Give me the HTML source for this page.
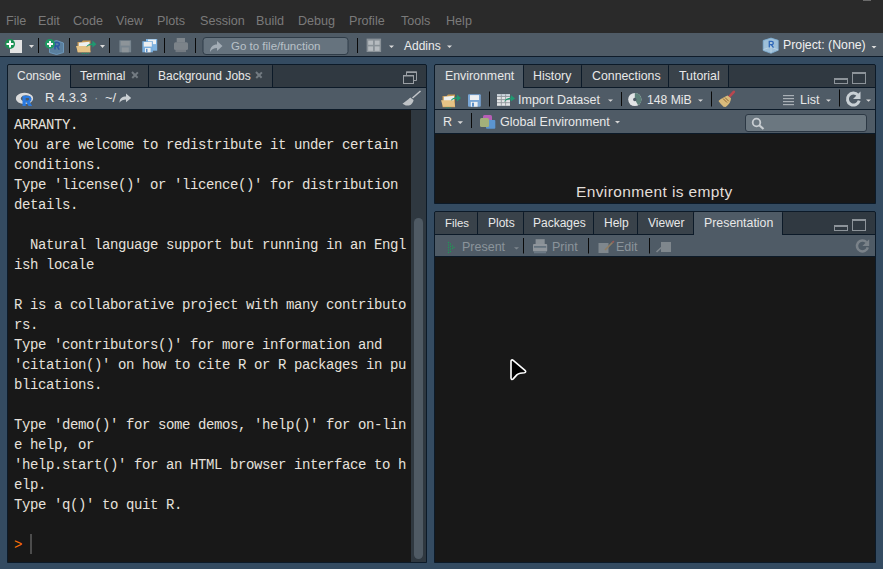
<!DOCTYPE html>
<html><head><meta charset="utf-8">
<style>
*{margin:0;padding:0;box-sizing:border-box}
html,body{width:883px;height:569px;overflow:hidden;background:#344b61;font-family:"Liberation Sans",sans-serif;position:relative}
.a{position:absolute}
#menubar{left:0;top:0;width:883px;height:33px;background:#2a2a2a}
#menubar span{position:absolute;top:14px;font-size:12.6px;color:#7a7a7a;line-height:15px}
#toolbar{left:0;top:33px;width:883px;height:24px;background:#4f5b66;border-bottom:1px solid #0f1c2a}
.sep{position:absolute;width:1px;background:#101010}
.pane{position:absolute;background:#181818;border:1px solid #0c1a28;border-radius:2px 2px 0 0;overflow:hidden}
.tabbar{position:absolute;left:0;top:0;right:0;height:23px;background:#303941;border-bottom:1px solid #0c1a28}
.tab{position:absolute;top:0;height:23px;background:#39424a;border-right:1px solid #0c1a28;border-radius:1px 1px 0 0;font-size:12px;color:#e8e8e8}
.tab.act{background:#4f5b66;height:23px}
.tab{height:22px}
.x{position:absolute;top:7px;width:7px;height:7px}
.x:before,.x:after{content:"";position:absolute;left:2.9px;top:-0.7px;width:1.5px;height:8.4px;background:#737b82;transform:rotate(45deg)}
.x:after{transform:rotate(-45deg)}
.sbar{position:absolute;background:#2f3840}
.thumb{position:absolute;background:#4f5a64;border-radius:5px}
.tab span{position:absolute;top:4px;line-height:14px}
.tbar{position:absolute;left:0;right:0;background:#4f5b66;border-bottom:1px solid #0c1a28;font-size:12px;color:#e8e8e8}
.tbar span{position:absolute;line-height:14px}
.con{font-family:"Liberation Mono",monospace;font-size:14px;letter-spacing:-0.4px;color:#e6e1dc;line-height:20px;white-space:pre}
.arr{position:absolute;width:0;height:0;border-left:3px solid transparent;border-right:3px solid transparent;border-top:3px solid #d0d0d0}
</style></head><body>
<div id="menubar" class="a">
<div class="a" style="left:863px;top:0;width:8px;height:1px;background:#6a6a6a"></div>
<span style="left:6px">File</span>
<span style="left:38px">Edit</span>
<span style="left:73px">Code</span>
<span style="left:116px">View</span>
<span style="left:157px">Plots</span>
<span style="left:200px">Session</span>
<span style="left:256px">Build</span>
<span style="left:298px">Debug</span>
<span style="left:349px">Profile</span>
<span style="left:401px">Tools</span>
<span style="left:446px">Help</span>
</div>
<div id="toolbar" class="a">
<svg class="a" style="left:0;top:0" width="883" height="23" viewBox="0 33 883 23">
 <!-- new file -->
 <rect x="10" y="40" width="12" height="13" fill="#e4e4e4"/>
 <circle cx="10" cy="44" r="5" fill="#1a9152"/>
 <rect x="6.5" y="43" width="7" height="2" fill="#fff"/>
 <rect x="9" y="40.5" width="2" height="7" fill="#fff"/>
 <path d="M29 45h5l-2.5 3z" fill="#dcdcdc"/>
 <rect x="38" y="38" width="1" height="15" fill="#0a0a0a"/>
 <!-- new project -->
 <path d="M49.5 43l7-2.5 7 2.5v9.5l-7 2-7-2z" fill="#5a7f9e" stroke="#6f9cc2" stroke-width="0.9"/>
 <path d="M55 42.5h2.5a1.8 1.8 0 0 1 0 3.6h-2.5zM55 42.5v7M57 46l2.2 3.6" stroke="#2a56a3" stroke-width="1.5" fill="none"/>
 <circle cx="49.9" cy="43.9" r="4.9" fill="#1d9c62"/>
 <rect x="47" y="43" width="6" height="2" fill="#f4f4f4"/>
 <rect x="49" y="41" width="2" height="6" fill="#f4f4f4"/>
 <rect x="69" y="38" width="1" height="15" fill="#0a0a0a"/>
 <!-- open folder -->
 <path d="M77.5 46v-4h4l1.5-1.5h7.5v11.7h-13z" fill="#c89a52"/>
 <path d="M78.8 42.8l10.7-1v8.5h-10.7z" fill="#eef0ef"/>
 <path d="M76 46h13.2l1.3 6.2h-12.6z" fill="#e5c386"/>
 <path d="M86.2 47.2c.8-2.6 3-3.8 6.2-3.8v-2.8l4 3.6-4 3.4v-2.6c-2.4 0-4.6.8-6.2 2.2z" fill="#1e9a70"/>
 <g fill="#1e9a70"><circle cx="82.3" cy="53.4" r=".6"/><circle cx="84.3" cy="53.4" r=".6"/><circle cx="86.3" cy="53.4" r=".6"/><circle cx="88.3" cy="53.4" r=".6"/></g>
 <path d="M100 45h5l-2.5 3z" fill="#dcdcdc"/>
 <rect x="109" y="38" width="1" height="15" fill="#0a0a0a"/>
 <!-- save disabled -->
 <rect x="119.4" y="40.3" width="11.7" height="12" fill="#78858f"/>
 <rect x="120.8" y="41" width="9" height="4.6" fill="#8d9499"/>
 <rect x="121.8" y="47.5" width="7" height="4.8" fill="#8d9499"/>
 <!-- save all -->
 <rect x="146" y="39" width="11.2" height="11.7" fill="#7fb3e0"/>
 <rect x="148" y="39.6" width="8" height="4.5" fill="#eef1f3"/>
 <rect x="142.3" y="41.2" width="10.6" height="11.1" fill="#7aaedd"/>
 <rect x="143.8" y="42" width="8" height="4.6" fill="#eceef0"/>
 <rect x="145" y="48" width="5.6" height="4.3" fill="#eceef0"/>
 <rect x="146" y="48.8" width="1.5" height="3.5" fill="#5b8fc8"/>
 <rect x="164" y="38" width="1" height="15" fill="#0a0a0a"/>
 <!-- print disabled -->
 <rect x="176.7" y="38" width="8.3" height="4.5" fill="#7f868c"/>
 <rect x="174" y="42.3" width="14" height="7.6" rx="1.5" fill="#7c8389"/>
 <rect x="175.5" y="49.9" width="10.5" height="2.2" fill="#737a81"/>
 <rect x="195" y="38" width="1" height="15" fill="#0a0a0a"/>
 <!-- goto box -->
 <rect x="203" y="37.5" width="145" height="17" rx="3" fill="#66737e" stroke="#2f3c48" stroke-width="1"/>
 <path d="M210 52c0-5 3-7.5 7-7.5v-3.5l5.5 5-5.5 5v-3c-3 0-5.5 1.5-7 4z" fill="#a3adb6"/>
 <rect x="357" y="38" width="1" height="15" fill="#0a0a0a"/>
 <!-- grid -->
 <rect x="366.6" y="38.6" width="14.5" height="13.4" fill="#8a9298"/>
 <g fill="#b6bbbf"><rect x="368.2" y="40.6" width="4.8" height="4.2"/><rect x="374.8" y="40.6" width="4.8" height="4.2"/><rect x="368.2" y="46.4" width="4.8" height="4.4"/><rect x="374.8" y="46.4" width="4.8" height="4.4"/></g>
 <path d="M389 45.5h5l-2.5 2.5z" fill="#dcdcdc"/>
 <path d="M447 45.5h5l-2.5 2.5z" fill="#dcdcdc"/>
 <!-- project icon -->
 <path d="M763.2 40.5l7.8-2.4 7.2 2.2v10l-7.2 3-7.8-2.8z" fill="#9ebfd8" stroke="#7fb0d6" stroke-width="0.8"/>
 <path d="M771 40.6v12.2M763.5 49.5l7.5-2.5 7.2 3" stroke="#c3d8e8" stroke-width="0.7" fill="none"/>
 <path d="M769.3 41.3h2.3a1.7 1.7 0 0 1 0 3.4h-2.3zM769.3 41.3v6.2M771.2 44.7l2.3 3" stroke="#2f68b8" stroke-width="1.3" fill="none"/>
 <path d="M871.5 46h5l-2.5 2.5z" fill="#dcdcdc"/>
</svg>
<span class="a" style="left:231px;top:7px;font-size:11.5px;line-height:13px;color:#b9c1c8">Go to file/function</span>
<span class="a" style="left:404px;top:6px;font-size:12px;line-height:14px;color:#ececec">Addins</span>
<span class="a" style="left:783px;top:5px;font-size:12.3px;line-height:15px;color:#f0f0f0">Project: (None)</span>
</div>

<!-- left pane -->
<div class="pane" style="left:7px;top:64px;width:420px;height:499px">
  <div class="tabbar">
    <div class="tab act" style="left:0;width:63px"><span style="left:9px">Console</span></div>
    <div class="tab" style="left:63px;width:78px"><span style="left:9px">Terminal</span><i class="x" style="left:60px"></i></div>
    <div class="tab" style="left:141px;width:124px"><span style="left:9px">Background Jobs</span><i class="x" style="left:106px"></i></div>
  </div>
  <div class="tbar" style="top:23px;height:22px">
    <span style="left:37px;top:3px;font-size:13px">R 4.3.3</span>
    <span style="left:86px;top:3px;font-size:13px;color:#9aa2a8">&middot;</span>
    <span style="left:97px;top:3px;font-size:13px">~/</span>
  </div>
  <svg class="a" style="left:0;top:0" width="418" height="45" viewBox="8 65 418 45">
    <!-- restore icon -->
    <path d="M406.5 75v-3h10v8.5h-2.5" stroke="#9a9fa4" stroke-width="1" fill="none"/>
    <rect x="406" y="71.5" width="11" height="1.5" fill="#9a9fa4"/>
    <rect x="403.5" y="75.5" width="10" height="8" stroke="#9a9fa4" stroke-width="1" fill="none"/>
    <rect x="403" y="75" width="11" height="1.5" fill="#9a9fa4"/>
    <!-- R logo -->
    <path fill-rule="evenodd" d="M24.5 92.8a8.6 5.6 0 1 0 0.01 0zM26 95.3a5.2 3.2 0 1 1 -0.01 0z" fill="#dcdcdc"/>
    <path fill-rule="evenodd" d="M22.5 95.8h6a3.2 3.2 0 0 1 1.2 6.1l2.5 4.1h-3.6l-2.1-3.6h-0.8v3.6h-3.2zM25.7 98.1v2.3h2.3a1.15 1.15 0 0 0 0-2.3z" fill="#2a7ae0"/>
    <!-- path arrow -->
    <path d="M119.5 102.8c0-4.5 2.8-6.2 6.5-6.2v-3.1l5.2 4.4-5.2 4.3v-2.7c-2.7 0-5 .9-6.5 3.3z" fill="#c9ced2"/>
    <!-- broom -->
    <path d="M420.5 91l-8 7" stroke="#c4c7ca" stroke-width="1.5" fill="none"/>
    <path d="M410.3 97.6l3.3 2.3c-.4 2.6-1.8 4.5-4.6 5.6l-3.2.1-3.3-1.8c2.6-1.6 5.3-4 7.8-6.2z" fill="#bfc3c6"/>
  </svg>
  <div class="sbar" style="left:403px;top:45px;width:15px;height:452px"><div class="thumb" style="left:3px;top:108px;width:9px;height:341px"></div></div>
  <div class="a con" style="left:6px;top:50px">ARRANTY.
You are welcome to redistribute it under certain
conditions.
Type 'license()' or 'licence()' for distribution
details.

  Natural language support but running in an Engl
ish locale

R is a collaborative project with many contributo
rs.
Type 'contributors()' for more information and
'citation()' on how to cite R or R packages in pu
blications.

Type 'demo()' for some demos, 'help()' for on-lin
e help, or
'help.start()' for an HTML browser interface to h
elp.
Type 'q()' to quit R.

<span style="color:#fc6f09">&gt;</span> </div>
  <div class="a" style="left:22px;top:469px;width:2px;height:20px;background:#4c4c4c"></div>
</div>

<!-- right top pane -->
<div class="pane" style="left:434px;top:64px;width:442px;height:140px">
  <div class="tabbar">
    <div class="tab act" style="left:0;width:89px"><span style="left:10px;font-size:12.35px">Environment</span></div>
    <div class="tab" style="left:89px;width:58px"><span style="left:9px;font-size:12.35px">History</span></div>
    <div class="tab" style="left:147px;width:87px"><span style="left:10px;font-size:12.35px">Connections</span></div>
    <div class="tab" style="left:234px;width:60px"><span style="left:10px;font-size:12.35px">Tutorial</span></div>
  </div>
  <div class="tbar" style="top:23px;height:22px">
    <span style="left:83px;top:5px;font-size:12.5px">Import Dataset</span>
    <span style="left:212px;top:5px;font-size:12.2px">148 MiB</span>
    <span style="left:365px;top:5px;font-size:12.5px">List</span>
  </div>
  <div class="tbar" style="top:45px;height:24px">
    <span style="left:8px;top:5px;font-size:12.5px">R</span>
    <span style="left:65px;top:5px;font-size:12.5px">Global Environment</span>
    <div class="a" style="left:310px;top:4px;width:122px;height:18px;background:#6b7780;border:1px solid #2c3844;border-radius:3px"></div>
  </div>
  <span class="a" style="left:141px;top:118px;font-size:15.5px;letter-spacing:0.38px;line-height:18px;color:#e2ded9">Environment is empty</span>
</div>

<!-- right bottom pane -->
<div class="pane" style="left:434px;top:211px;width:442px;height:352px">
  <div class="tabbar">
    <div class="tab" style="left:0;width:43px"><span style="left:10px;font-size:11.4px">Files</span></div>
    <div class="tab" style="left:43px;width:46px"><span style="left:10px;font-size:12px">Plots</span></div>
    <div class="tab" style="left:89px;width:70px"><span style="left:9px;font-size:12px">Packages</span></div>
    <div class="tab" style="left:159px;width:44px"><span style="left:10px;font-size:12px">Help</span></div>
    <div class="tab" style="left:203px;width:56px"><span style="left:10px;font-size:12px">Viewer</span></div>
    <div class="tab act" style="left:259px;width:89px"><span style="left:10px;font-size:12.35px">Presentation</span></div>
  </div>
  <div class="tbar" style="top:23px;height:22px;color:#8b949b">
    <span style="left:27px;top:5px;font-size:12.5px">Present</span>
    <span style="left:117px;top:5px;font-size:12.5px">Print</span>
    <span style="left:181px;top:5px;font-size:12.5px">Edit</span>
  </div>
</div>

<svg class="a" style="left:0;top:0" width="883" height="569" viewBox="0 0 883 569">
 <!-- top right min/max -->
 <g stroke="#8c9399" stroke-width="1" fill="none">
  <rect x="834.5" y="78.5" width="13" height="5"/>
  <rect x="852.5" y="72.5" width="13" height="11"/>
  <rect x="834.5" y="225.5" width="13" height="5"/>
  <rect x="852.5" y="219.5" width="13" height="11"/>
 </g>
 <g fill="#8c9399">
  <rect x="834" y="78" width="14" height="2"/>
  <rect x="852" y="72" width="14" height="2"/>
  <rect x="834" y="225" width="14" height="2"/>
  <rect x="852" y="219" width="14" height="2"/>
 </g>
 <!-- env toolbar -->
 <path d="M442.5 100v-4h4l1.5-1.5h7v12.8h-12.5z" fill="#c89a52"/>
 <path d="M443.8 96.8l10.2-1v8.5h-10.2z" fill="#eef0ef"/>
 <path d="M441 100.2h12.8l1.4 6.6h-12.2z" fill="#e5c386"/>
 <path d="M450.7 101c.8-2.6 3-3.8 6.2-3.8v-2.6l4 3.5-4 3.3v-2.6c-2.4 0-4.6.8-6.2 2.2z" fill="#1e9a70"/>
 <g fill="#1e9a70"><circle cx="446.3" cy="107.8" r=".6"/><circle cx="448.3" cy="107.8" r=".6"/><circle cx="450.3" cy="107.8" r=".6"/></g>
 <rect x="468" y="94.2" width="12.8" height="12.5" rx="1" fill="#79a6d6"/>
 <rect x="470" y="95.1" width="9" height="4.9" fill="#eceff2"/>
 <rect x="470.8" y="101.9" width="6.8" height="4.8" fill="#eceff2"/>
 <rect x="472" y="102.7" width="2" height="4" fill="#5b8fc8"/>
 <rect x="489" y="91.5" width="1" height="15" fill="#0a0a0a"/>
 <rect x="497" y="94.3" width="13" height="11.5" fill="#e3e5e7"/>
 <rect x="497" y="94.3" width="13" height="2" fill="#c9d3dc"/>
 <path d="M501.3 94.3v11.5M505.6 94.3v11.5M497 96.5h13M497 99.6h13M497 102.7h13" stroke="#8e959b" stroke-width="0.9"/>
 <path d="M504 102.2c1-3 3-4.5 6.8-4.5v-2.6l4.2 3.3-4.2 3.2v-2.3c-2.6 0-4.6.6-6.8 2.9z" fill="#1e9a70"/>
 <path d="M608 99.5h5l-2.5 2.2z" fill="#d6d6d6"/>
 <rect x="621" y="92" width="1" height="14" fill="#0a0a0a"/>
 <circle cx="634.8" cy="99.5" r="6.6" fill="#e2e4e6"/>
 <path d="M634.8 99.5v-6.6a6.6 6.6 0 0 1 3.3 12.3z" fill="#5c7f78"/>
 <circle cx="634.8" cy="99.5" r="1.7" fill="#4f5b66"/>
 <path d="M698 99.5h5l-2.5 2.2z" fill="#d6d6d6"/>
 <rect x="711" y="91.5" width="1" height="15" fill="#0a0a0a"/>
 <path d="M733.8 91.8l-4.6 5" stroke="#b9474f" stroke-width="2.6" stroke-linecap="round"/>
 <path d="M727.5 95.5l3.5 2.8c-.3 3-1.2 6-5.5 8.7l-2-.3c-2-2-3.5-3.5-5-5.8 2.5-2.3 5.5-3.9 9-5.4z" fill="#d9bb7c"/>
 <path d="M723 98.5l4 4M725 97.5l3.8 3.8" stroke="#8d6633" stroke-width="1"/>
 <g fill="#a9b0b6"><rect x="783" y="95" width="11" height="1.2"/><rect x="783" y="98" width="11" height="1.2"/><rect x="783" y="101" width="11" height="1.2"/><rect x="783" y="104" width="11" height="1.2"/></g>
 <path d="M826 99.5h5l-2.5 2.2z" fill="#d6d6d6"/>
 <rect x="839" y="89.5" width="1" height="17" fill="#0a0a0a"/>
 <path d="M858 95.2a6 6 0 1 0 1.2 5.5" stroke="#c9d0d5" stroke-width="3" fill="none"/>
 <path d="M860.5 91.5v7.5h-7.5z" fill="#c9d0d5"/>
 <path d="M866 99.5h5l-2.5 2.2z" fill="#d6d6d6"/>
 <!-- env toolbar 2 -->
 <path d="M457.5 121.2h5.5l-2.75 2.8z" fill="#d6d6d6"/>
 <rect x="471" y="113" width="1" height="15" fill="#0a0a0a"/>
 <rect x="483" y="115" width="9" height="8.5" rx="1.5" fill="#b65fb6"/>
 <rect x="486" y="120" width="9.3" height="8.8" rx="1" fill="#5b95d0"/>
 <rect x="480" y="118" width="9" height="9" rx="1.5" fill="#a3b07a"/>
 <path d="M615 121h5l-2.5 2.5z" fill="#d6d6d6"/>
 <circle cx="756.5" cy="122.5" r="3.8" stroke="#c8cdd1" stroke-width="1.8" fill="none"/>
 <path d="M759 125l4.5 4" stroke="#c8cdd1" stroke-width="2.2"/>
 <!-- bottom pane toolbar -->
 <g fill="#1e9a55"><circle cx="448.5" cy="242.5" r=".7"/><circle cx="448.5" cy="245" r=".7"/><circle cx="448.5" cy="247.5" r=".7"/><circle cx="448.5" cy="250" r=".7"/><circle cx="448.5" cy="252.5" r=".7"/><circle cx="450.5" cy="244" r=".7"/><circle cx="450.5" cy="246.5" r=".7"/><circle cx="450.5" cy="249" r=".7"/><circle cx="450.5" cy="251.5" r=".7"/><circle cx="452.5" cy="246" r=".7"/><circle cx="452.5" cy="248.5" r=".7"/><circle cx="454" cy="247.5" r=".7"/></g>
 <path d="M514 247.3h5l-2.5 2.3z" fill="#7d868e"/>
 <rect x="523" y="238" width="1" height="15.5" fill="#0a0a0a"/>
 <rect x="535.6" y="239.2" width="9.1" height="5" fill="#899096"/>
 <rect x="533" y="244" width="14.2" height="7.5" rx="1" fill="#8f959b"/>
 <rect x="534" y="246.2" width="12.2" height="1.4" fill="#5a6a78"/>
 <rect x="534" y="251.5" width="12" height="1.8" fill="#6b7884"/>
 <rect x="588" y="238" width="1" height="15.5" fill="#0a0a0a"/>
 <rect x="598.5" y="243" width="10" height="10" fill="#7f878d"/>
 <path d="M605 250l7.5-7.5" stroke="#8f7d62" stroke-width="1.7"/>
 <path d="M612.3 242.7l1.6-1.6" stroke="#9a5a58" stroke-width="1.7"/>
 <rect x="649" y="238" width="1" height="15.5" fill="#0a0a0a"/>
 <rect x="661" y="242" width="10" height="10" fill="#7f878d"/>
 <path d="M656.5 252l6-5.5" stroke="#7f878d" stroke-width="1.6"/>
 <path d="M866.4 242.1a5.5 5.5 0 1 0 1.4 5.3" stroke="#7a8289" stroke-width="2.5" fill="none"/>
 <path d="M869.2 239.2v6.8h-6.8z" fill="#7a8289"/>
 <!-- mouse cursor -->
 <path d="M511 361.5c0-1.5 1.2-2 2.2-1.2l11.8 10c1.2 1 .8 2.3-.7 2.5l-4 .4c-1.5.2-2.5.7-3.5 1.7l-3.6 4c-1 1-2.2.6-2.2-.8z" fill="#000" stroke="#fff" stroke-width="1.6" stroke-linejoin="round"/>
</svg>
</body></html>
